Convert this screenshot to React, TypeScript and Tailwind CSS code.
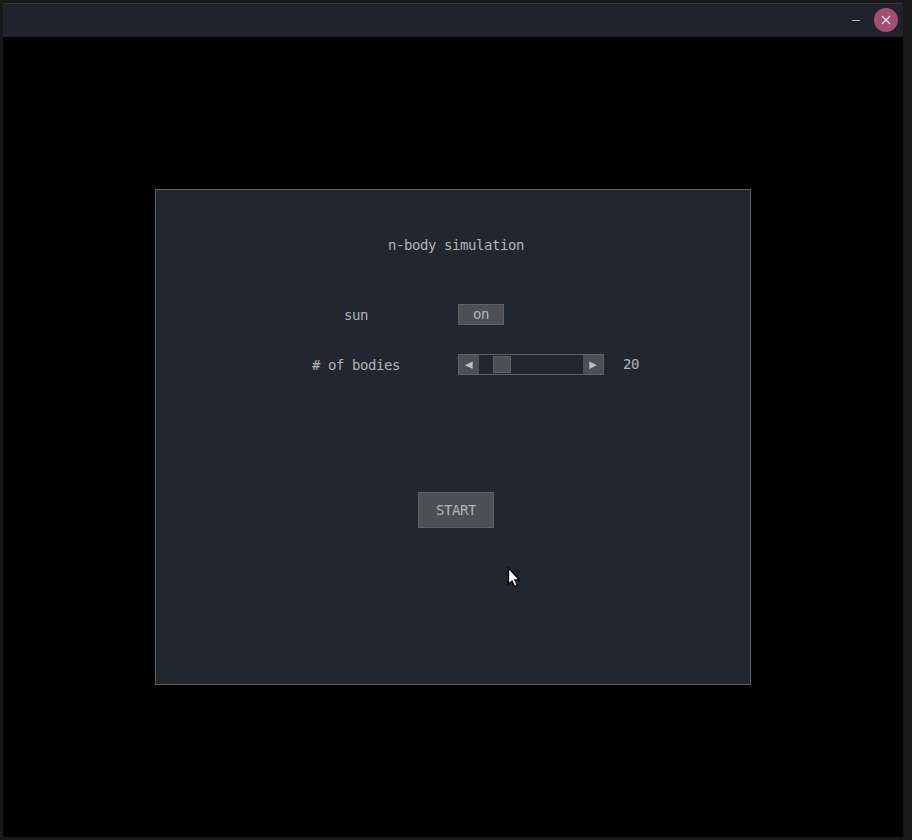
import { useState } from "react";

function TitleBar() {
  return (
    <header className="flex h-[34px] shrink-0 items-center justify-end gap-[14px] rounded-t-[2px] border-t border-[#36383a] bg-[#20232b] pr-[5px] pb-px">
      <button aria-label="Minimize" className="flex h-6 w-2 items-center">
        <span className="mt-px h-px w-2 bg-[#b5b7ba]" />
      </button>
      <button aria-label="Close" className="flex size-6 items-center justify-center rounded-full bg-[#a54e6e]">
        <svg width="10" height="10" viewBox="0 0 10 10" stroke="#f1e8ec" strokeWidth="1.3">
          <path d="M1 1L9 9M9 1L1 9" />
        </svg>
      </button>
    </header>
  );
}

function Slider({ value }: { value: number }) {
  return (
    <div className="flex h-[21px] w-[146px] border border-[#5e6162] bg-[#21282d]">
      <button aria-label="Decrease" className="flex w-5 items-center justify-center bg-[#4c5052]">
        <svg width="8" height="8" viewBox="0 0 8 8" fill="#bdbfbf">
          <path d="M0 4.2L7.7 0.5V7.9Z" />
        </svg>
      </button>
      <div className="flex w-[104px] items-center">
        <span
          className="h-[17px] w-[18px] border border-[#5e6162] bg-[#4c5052]"
          style={{ marginLeft: value * 0.7 }}
        />
      </div>
      <button aria-label="Increase" className="flex w-5 items-center justify-center bg-[#4c5052]">
        <svg width="8" height="8" viewBox="0 0 8 8" fill="#bdbfbf">
          <path d="M8 4.2L0.3 0.5V7.9Z" />
        </svg>
      </button>
    </div>
  );
}

export default function App() {
  const [sun, setSun] = useState(true);
  const bodies = 20;
  return (
    <div className="relative h-[840px] w-[912px] overflow-hidden bg-[#191919] pt-[3px] pl-[3px]">
      <div className="flex h-[834px] w-[900px] flex-col">
        <TitleBar />
        <main className="flex grow flex-col items-center bg-black pt-[152px]">
          <section className="flex h-[496px] w-[596px] flex-col border border-[#5e6162] bg-[#21282d] font-['DejaVu_Sans_Mono',monospace] text-[14px] leading-5 tracking-[-0.428px] text-[#b2b4b4] opacity-[0.999]">
            <h1 className="mt-[45px] ml-[232px] whitespace-nowrap">n-body simulation</h1>
            <div className="mt-[49px] flex h-[21px] items-start">
              <div className="w-[302px] pt-px pl-[188px]">sun</div>
              <button
                onClick={() => setSun(!sun)}
                className="h-[21px] w-[46px] border border-[#5e6162] bg-[#4c5052] leading-[19px]"
              >
                {sun ? "on" : "off"}
              </button>
            </div>
            <div className="mt-[29px] flex h-[21px] items-start">
              <div className="w-[302px] pt-px pl-[156px] whitespace-nowrap"># of bodies</div>
              <Slider value={bodies} />
              <div className="ml-[19px]">{bodies}</div>
            </div>
            <button className="mt-[117px] ml-[262px] h-9 w-[76px] border border-[#5e6162] bg-[#4c5052]">START</button>
          </section>
        </main>
      </div>
      <svg className="absolute top-[566px] left-[507px]" width="15" height="23" viewBox="0 0 15 23">
        <path
          d="M1.5 2V18.2L5 15L7.6 20.6L10.3 19.3L7.8 14H12.5Z"
          fill="white"
          stroke="black"
          strokeWidth="1.3"
        />
      </svg>
    </div>
  );
}
